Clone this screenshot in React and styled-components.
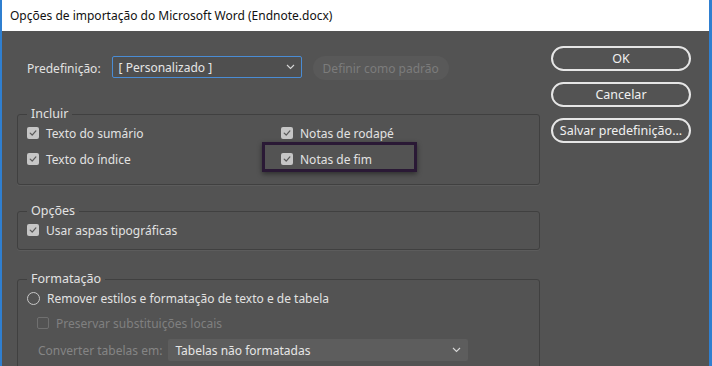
import React from 'react';
import styled, { createGlobalStyle } from 'styled-components';

const GlobalStyle = createGlobalStyle`
  html, body {
    margin: 0;
    padding: 0;
    background: #535353;
  }
`;

const Check = ({ size = 8 }) => (
  <svg width={size} height={size} viewBox="0 0 10 10">
    <path d="M1.5 5.2 L4 7.6 L8.6 2.4" fill="none" stroke="#5a5a5a" strokeWidth="1.6" strokeLinecap="round" strokeLinejoin="round" />
  </svg>
);

const Chevron = () => (
  <svg width="9" height="6" viewBox="0 0 9 6">
    <path d="M1 1 L4.5 4.5 L8 1" fill="none" stroke="#d8d8d8" strokeWidth="1.1" />
  </svg>
);

const App = () => {
  return (
    <Window>
      <GlobalStyle />
      <TitleBar>Opções de importação do Microsoft Word (Endnote.docx)</TitleBar>
      <Body>
        <Main>
          <TopRow>
            <Label>Predefinição:</Label>
            <Select width={190} focused>
              <span>[ Personalizado ]</span>
              <Chevron />
            </Select>
            <GhostButton>Definir como padrão</GhostButton>
          </TopRow>

          <Group $gap={26}>
            <legend>Incluir</legend>
            <Grid>
              <CheckItem>
                <Box checked><Check /></Box>
                Texto do sumário
              </CheckItem>
              <CheckItem>
                <Box checked><Check /></Box>
                Notas de rodapé
              </CheckItem>
              <CheckItem>
                <Box checked><Check /></Box>
                Texto do índice
              </CheckItem>
              <CheckItem highlight>
                <Box checked><Check /></Box>
                Notas de fim
              </CheckItem>
            </Grid>
          </Group>

          <Group $gap={18} $bottom={9}>
            <legend>Opções</legend>
            <CheckItem>
              <Box checked><Check /></Box>
              Usar aspas tipográficas
            </CheckItem>
          </Group>

          <Group $gap={21}>
            <legend>Formatação</legend>
            <Stack>
              <CheckItem>
                <Radio />
                Remover estilos e formatação de texto e de tabela
              </CheckItem>
              <CheckItem disabled indent={10}>
                <Box />
                Preservar substituições locais
              </CheckItem>
              <SelectRow>
                <Label disabled>Converter tabelas em:</Label>
                <Select width={300} filled>
                  <span>Tabelas não formatadas</span>
                  <Chevron />
                </Select>
              </SelectRow>
            </Stack>
          </Group>
        </Main>

        <Side>
          <PillButton>OK</PillButton>
          <PillButton>Cancelar</PillButton>
          <PillButton>Salvar predefinição...</PillButton>
        </Side>
      </Body>
    </Window>
  );
};

export default App;

const Window = styled.div`
  width: 712px;
  height: 366px;
  box-sizing: border-box;
  border-left: 2px solid #2f7fd0;
  border-right: 3px solid #2f7fd0;
  display: flex;
  flex-direction: column;
  overflow: hidden;
  font-family: 'Noto Sans', 'Open Sans', sans-serif;
  font-size: 12px;
  color: #e2e2e2;
`;

const TitleBar = styled.div`
  height: 31px;
  flex-shrink: 0;
  background: #fff;
  color: #111;
  font-size: 12px;
  display: flex;
  align-items: center;
  padding-left: 8px;
`;

const Body = styled.div`
  flex: 1;
  background: #535353;
  display: flex;
  gap: 11px;
  padding: 15px 15px 0 15px;
`;

const Main = styled.div`
  width: 523px;
  padding-top: 10px;
  display: flex;
  flex-direction: column;
`;

const TopRow = styled.div`
  display: flex;
  align-items: center;
  height: 24px;
  padding-left: 10px;
  gap: 11px;
`;

const Label = styled.span`
  color: ${(p) => (p.disabled ? '#858585' : '#e2e2e2')};
  white-space: nowrap;
`;

const Select = styled.div`
  width: ${(p) => p.width}px;
  height: 22px;
  box-sizing: border-box;
  display: flex;
  align-items: center;
  justify-content: space-between;
  padding: 0 6px 0 6px;
  border: 1px solid ${(p) => (p.focused ? '#4a8cd4' : 'transparent')};
  background: ${(p) => (p.filled ? '#5d5d5d' : '#4f4f4f')};
  border-radius: 2px;
  color: #e6e6e6;
  align-self: ${(p) => (p.focused ? 'flex-start' : 'center')};
`;

const GhostButton = styled.div`
  height: 24px;
  padding: 0 10px;
  display: flex;
  align-items: center;
  border-radius: 12px;
  background: #595959;
  color: #7c7c7c;
`;

const Group = styled.fieldset`
  margin: ${(p) => p.$gap}px 0 0 0;
  padding: 1px 9px ${(p) => p.$bottom ?? 15}px 9px;
  border: 1px solid #404040;
  border-radius: 3px;
  box-shadow: 0 1px 0 #5c5c5c;

  legend {
    padding: 0 4px;
    font-size: 12.5px;
    line-height: 16px;
    color: #e2e2e2;
  }
`;

const Grid = styled.div`
  display: grid;
  grid-template-columns: 254px 1fr;
  row-gap: 6px;
`;

const Stack = styled.div`
  display: flex;
  flex-direction: column;
  gap: 5px;
`;

const CheckItem = styled.div`
  position: relative;
  height: 20px;
  display: flex;
  align-items: center;
  gap: 7px;
  padding-left: ${(p) => p.indent || 0}px;
  color: ${(p) => (p.disabled ? '#808080' : '#e2e2e2')};
  white-space: nowrap;

  ${(p) =>
    p.highlight &&
    `
    &::after {
      content: '';
      position: absolute;
      left: -19px;
      top: -7px;
      width: 155px;
      height: 30px;
      box-sizing: border-box;
      border: 3px solid #2a1935;
      box-shadow: 0 2px 5px rgba(0, 0, 0, 0.45);
    }
  `}
`;

const Box = styled.span`
  width: 12px;
  height: 12px;
  box-sizing: border-box;
  border-radius: 2px;
  display: inline-flex;
  align-items: center;
  justify-content: center;
  flex-shrink: 0;
  background: ${(p) => (p.checked ? '#c6c6c6' : 'transparent')};
  border: ${(p) => (p.checked ? 'none' : '1px solid #707070')};
`;

const Radio = styled.span`
  width: 13px;
  height: 13px;
  box-sizing: border-box;
  border-radius: 50%;
  border: 1.5px solid #c8c8c8;
  flex-shrink: 0;
`;

const SelectRow = styled.div`
  display: flex;
  align-items: center;
  gap: 6px;
  padding-left: 11px;
  height: 22px;
  margin-top: 1px;
`;

const Side = styled.div`
  width: 140px;
  display: flex;
  flex-direction: column;
  gap: 11px;
`;

const PillButton = styled.button`
  height: 25px;
  box-sizing: border-box;
  border: 2px solid #e6e6e6;
  border-radius: 13px;
  background: transparent;
  color: #f0f0f0;
  font-family: inherit;
  font-size: 12.5px;
  padding: 0;
  cursor: pointer;
`;
